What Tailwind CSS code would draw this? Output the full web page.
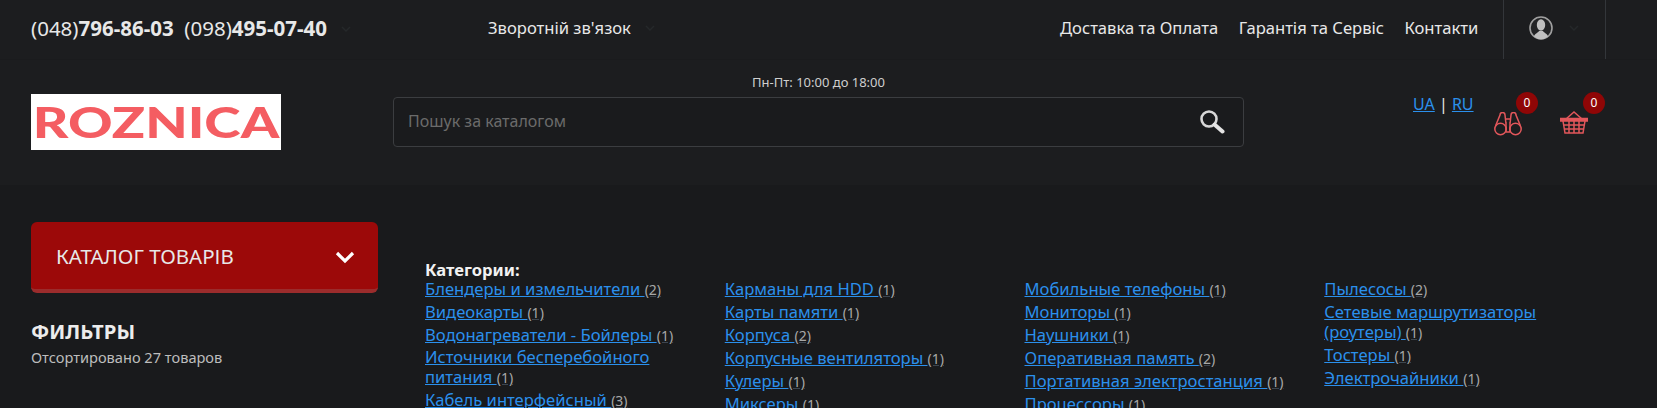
<!DOCTYPE html>
<html lang="uk"><head><meta charset="utf-8">
<script src="https://cdn.jsdelivr.net/npm/@tailwindcss/browser@4"></script>
<title>Roznica</title></head>
<body class="m-0 h-[408px] overflow-hidden bg-[#191a1c] font-['Noto_Sans',sans-serif] text-[#e8e8e8]">
<header class="bg-[#1c1d1f]">
  <div class="flex h-[60px] items-center pl-[31px] text-[16.6px] border-b border-[#1a1b1d]">
    <div class="mb-[2px] flex w-[457px] items-center gap-[14px] text-[20.500px]"><span>(048)<b>796-86-03</b>&nbsp; (098)<b>495-07-40</b></span><svg width="10" height="6" viewBox="0 0 10 6" fill="none"><path d="M1 1l4 4 4-4" stroke="#25282a" stroke-width="1.500"/></svg></div>
    <a class="mb-[2px] flex w-[572px] items-center gap-[14px]"><span>Зворотній зв'язок</span><svg width="10" height="6" viewBox="0 0 10 6" fill="none"><path d="M1 1l4 4 4-4" stroke="#25282a" stroke-width="1.500"/></svg></a>
    <nav class="mb-[2px] flex w-[443px] gap-[20.500px]"><a>Доставка та Оплата</a><a>Гарантія та Сервіс</a><a>Контакти</a></nav>
    <div class="flex h-full w-[103px] items-center justify-start gap-[16px] border-x border-[#33363a] pl-[25px]">
      <svg class="mb-[3px]" width="24" height="24" viewBox="0 0 24 24"><circle cx="12" cy="12" r="11" fill="#232426" stroke="#a0a0a0" stroke-width="1.600"/><ellipse cx="12" cy="9" rx="4.200" ry="5.800" fill="#c0c0c0"/><path d="M5 20.500c.5-3 4-3.500 5-5.500h4c1 2 4.500 2.500 5 5.500a10.500 10.500 0 0 1-14 0z" fill="#c0c0c0"/></svg>
      <svg class="mb-[3px]" width="10" height="6" viewBox="0 0 10 6" fill="none"><path d="M1 1l4 4 4-4" stroke="#25282a" stroke-width="1.500"/></svg>
    </div>
  </div>
  <div class="flex h-[125px] pl-[31px]">
    <div class="mt-[34px] flex h-[56px] w-[250px] items-center justify-center overflow-hidden bg-white font-['Lato',sans-serif] text-[42px] leading-none font-black text-[#f45d62]"><span class="scale-x-[1.310]">ROZNICA</span></div>
    <div class="ml-[112px] w-[851px]">
      <div class="mt-[13px] h-[24px] text-center text-[13px] leading-[18px] text-[#cfcfcf]">Пн-Пт: 10:00 до 18:00</div>
      <div class="flex h-[50px] items-center justify-between rounded-[4px] border border-[#3b3d40] bg-[#1a1b1d] pr-[18px] pl-[14px]">
        <span class="mb-[2px] text-[16px] text-[#6b6b6b]">Пошук за каталогом</span>
        <svg width="26" height="26" viewBox="0 0 26 26" fill="none"><circle cx="10" cy="10" r="7.500" stroke="#d8d8d8" stroke-width="2.600"/><path d="M15.500 15.500l8 7" stroke="#e4e4e4" stroke-width="4" stroke-linecap="round"/></svg>
      </div>
    </div>
    <div class="ml-[169px] mt-[34px] w-[57px] h-[20px] whitespace-nowrap text-[16px] leading-[20px]"><a class="text-[#2b90ec] underline">UA</a> | <a class="text-[#2b90ec] underline">RU</a></div>
    <div class="relative ml-[24px] mt-[52px] h-[24px] w-[28px]">
      <svg width="28" height="24" viewBox="0 0 28 24" fill="none" stroke="#e2575b" stroke-width="1.500"><circle cx="6.500" cy="17" r="5.700"/><circle cx="21.500" cy="17" r="5.700"/><path d="M1.500 14L6 3a2.500 2.500 0 0 1 5 0l1 9M26.500 14L22 3a2.500 2.500 0 0 0-5 0l-1 9M11.500 7h5M12 10v10h4V10"/></svg>
      <span class="absolute -top-[20px] left-[22px] flex h-[22px] w-[22px] items-center justify-center rounded-full bg-[#8f0606] text-[12px] text-white">0</span>
    </div>
    <div class="relative ml-[38px] mt-[51px] h-[23px] w-[28px]">
      <svg width="28" height="23" viewBox="0 0 28 23" fill="none" stroke="#e2575b" stroke-width="1.500"><path d="M6 8l8-7 8 7"/><path d="M.5 7.500h27v2.500H.5z" fill="#e2575b"/><path d="M3 10l2 12h18l2-12M3.500 14h21M4.500 18h19M9 10v12M14 10v12M19 10v12"/></svg>
      <span class="absolute -top-[19px] left-[23px] flex h-[22px] w-[22px] items-center justify-center rounded-full bg-[#8f0606] text-[12px] text-white">0</span>
    </div>
  </div>
</header>
<main class="flex pl-[31px]">
  <aside class="w-[347px] pt-[37px]">
    <div class="flex h-[71px] items-center justify-between rounded-[6px] border-b-[4px] border-[#9b2c2c] bg-[#9c0909] pr-[23px] pl-[25px] text-[20.500px] text-[#e8e8e8]">
      <span class="mt-[2px]">КАТАЛОГ ТОВАРІВ</span>
      <svg class="mt-[2px]" width="20" height="14" viewBox="0 0 20 14" fill="none"><path d="M2 3l8 8 8-8" stroke="#fff" stroke-width="3.200"/></svg>
    </div>
    <h2 class="mt-[26px] text-[20.300px] leading-[24px] font-bold text-[#ececec]">ФИЛЬТРЫ</h2>
    <p class="mt-[4px] text-[14.600px] leading-[20px] text-[#bdbdbd]">Отсортировано 27 товаров</p>
  </aside>
  <section class="ml-[47px] w-[1199px] pt-[77px] text-[16.600px] leading-[20px]">
    <b class="block h-[17px] leading-[16px] text-[#f2f2f2]">Категории:</b>
    <div class="grid grid-cols-4 items-start">
      <ul class="w-[272px]">
        <li class="pb-[2px]"><a class="text-[#2b90ec] underline">Блендеры и измельчители </a><small class="text-[14px] text-[#a8a8a8] underline decoration-[#3d4650]">(2)</small></li>
        <li class="pb-[2px]"><a class="text-[#2b90ec] underline">Видеокарты </a><small class="text-[14px] text-[#a8a8a8] underline decoration-[#3d4650]">(1)</small></li>
        <li class="pb-[1px]"><a class="text-[#2b90ec] underline">Водонагреватели - Бойлеры </a><small class="text-[14px] text-[#a8a8a8] underline decoration-[#3d4650]">(1)</small></li>
        <li class="pb-[2px]"><a class="text-[#2b90ec] underline">Источники бесперебойного питания </a><small class="text-[14px] text-[#a8a8a8] underline decoration-[#3d4650]">(1)</small></li>
        <li class="pb-[2px]"><a class="text-[#2b90ec] underline">Кабель интерфейсный </a><small class="text-[14px] text-[#a8a8a8] underline decoration-[#3d4650]">(3)</small></li>
      </ul>
      <ul class="w-[272px]">
        <li class="pb-[2px]"><a class="text-[#2b90ec] underline">Карманы для HDD </a><small class="text-[14px] text-[#a8a8a8] underline decoration-[#3d4650]">(1)</small></li>
        <li class="pb-[2px]"><a class="text-[#2b90ec] underline">Карты памяти </a><small class="text-[14px] text-[#a8a8a8] underline decoration-[#3d4650]">(1)</small></li>
        <li class="pb-[2px]"><a class="text-[#2b90ec] underline">Корпуса </a><small class="text-[14px] text-[#a8a8a8] underline decoration-[#3d4650]">(2)</small></li>
        <li class="pb-[2px]"><a class="text-[#2b90ec] underline">Корпусные вентиляторы </a><small class="text-[14px] text-[#a8a8a8] underline decoration-[#3d4650]">(1)</small></li>
        <li class="pb-[2px]"><a class="text-[#2b90ec] underline">Кулеры </a><small class="text-[14px] text-[#a8a8a8] underline decoration-[#3d4650]">(1)</small></li>
        <li class="pb-[2px]"><a class="text-[#2b90ec] underline">Миксеры </a><small class="text-[14px] text-[#a8a8a8] underline decoration-[#3d4650]">(1)</small></li>
      </ul>
      <ul class="w-[272px]">
        <li class="pb-[2px]"><a class="text-[#2b90ec] underline">Мобильные телефоны </a><small class="text-[14px] text-[#a8a8a8] underline decoration-[#3d4650]">(1)</small></li>
        <li class="pb-[2px]"><a class="text-[#2b90ec] underline">Мониторы </a><small class="text-[14px] text-[#a8a8a8] underline decoration-[#3d4650]">(1)</small></li>
        <li class="pb-[2px]"><a class="text-[#2b90ec] underline">Наушники </a><small class="text-[14px] text-[#a8a8a8] underline decoration-[#3d4650]">(1)</small></li>
        <li class="pb-[2px]"><a class="text-[#2b90ec] underline">Оперативная память </a><small class="text-[14px] text-[#a8a8a8] underline decoration-[#3d4650]">(2)</small></li>
        <li class="pb-[2px]"><a class="text-[#2b90ec] underline">Портативная электростанция </a><small class="text-[14px] text-[#a8a8a8] underline decoration-[#3d4650]">(1)</small></li>
        <li class="pb-[2px]"><a class="text-[#2b90ec] underline">Процессоры </a><small class="text-[14px] text-[#a8a8a8] underline decoration-[#3d4650]">(1)</small></li>
      </ul>
      <ul class="w-[272px]">
        <li class="pb-[2px]"><a class="text-[#2b90ec] underline">Пылесосы </a><small class="text-[14px] text-[#a8a8a8] underline decoration-[#3d4650]">(2)</small></li>
        <li class="pb-[2px]"><a class="text-[#2b90ec] underline">Сетевые маршрутизаторы (роутеры) </a><small class="text-[14px] text-[#a8a8a8] underline decoration-[#3d4650]">(1)</small></li>
        <li class="pb-[2px]"><a class="text-[#2b90ec] underline">Тостеры </a><small class="text-[14px] text-[#a8a8a8] underline decoration-[#3d4650]">(1)</small></li>
        <li class="pb-[2px]"><a class="text-[#2b90ec] underline">Электрочайники </a><small class="text-[14px] text-[#a8a8a8] underline decoration-[#3d4650]">(1)</small></li>
      </ul>
    </div>
  </section>
</main>
</body></html>
